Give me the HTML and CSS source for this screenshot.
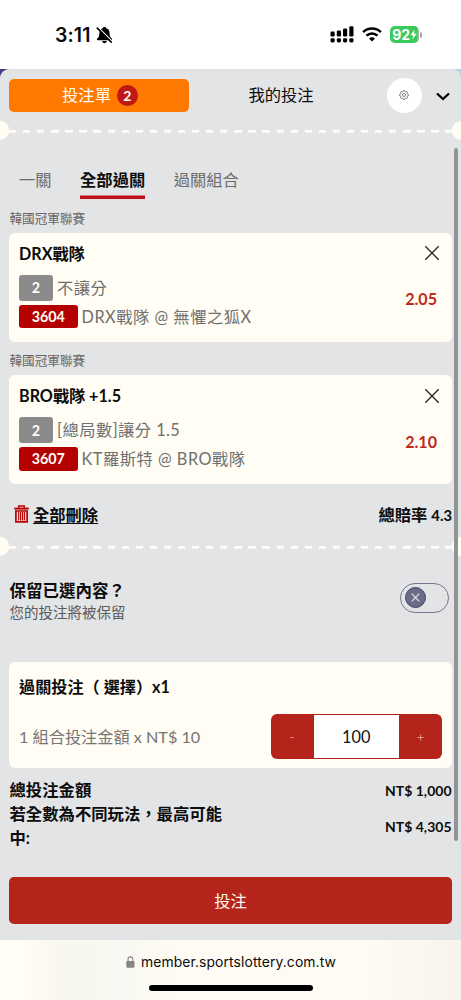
FILE: index.html
```html
<!DOCTYPE html>
<html lang="zh-Hant">
<head>
<meta charset="utf-8">
<meta name="viewport" content="width=device-width, initial-scale=1">
<title>投注單</title>
<link rel="stylesheet" href="styles.css">
</head>
<body>
<div class="phone">
  <header class="status">
    <div class="status-left">
      <span class="clock">3:11</span>
      <svg class="bell" width="17" height="18" viewBox="0 0 17 18"><path d="M8.5 1C7.4 1 6.8 1.6 6.7 2.3C4.4 3 3.5 4.9 3.4 7.2C3.3 10.4 2.6 11.3 1.2 12.6C.5 13.3.8 14.2 1.8 14.2H15.2C16.2 14.2 16.5 13.3 15.8 12.6C14.4 11.3 13.7 10.4 13.6 7.2C13.5 4.9 12.6 3 10.3 2.3C10.2 1.6 9.6 1 8.5 1ZM6.1 15.1C6.5 16.6 7.3 17.2 8.5 17.2S10.5 16.6 10.9 15.1Z"/><path d="M2 1.2L17 16.2" stroke="#fff" stroke-width="1.4"/><path d="M.8 1.6L15.8 16.6" stroke="#000" stroke-width="1.5"/></svg>
    </div>
    <div class="status-right">
      <svg width="24" height="17" viewBox="0 0 24 17"><rect x=".5" y="5.5" width="4.2" height="5" rx="1.3"/><rect x="6.8" y="4.4" width="4.2" height="6.1" rx="1.3"/><rect x="13" y="2.4" width="4.2" height="8.1" rx="1.3"/><rect x="19.3" y=".3" width="4.2" height="10.2" rx="1.3"/><rect x=".5" y="12.2" width="4.2" height="4.2" rx="1.4"/><rect x="6.8" y="12.2" width="4.2" height="4.2" rx="1.4"/><rect x="13" y="12.2" width="4.2" height="4.2" rx="1.4"/><rect x="19.3" y="12.2" width="4.2" height="4.2" rx="1.4"/></svg>
      <svg class="wifi" width="20" height="15" viewBox="0 0 20 15" fill="none" stroke="#000" stroke-width="2.5"><path d="M1.1 5.2C6 .4 14 .4 18.9 5.2"/><path d="M4.5 8.7C7.5 5.8 12.500 5.8 15.500 8.7"/><path d="M10 14.400L7 11.400C8.700 9.900 11.300 9.900 13 11.400Z" fill="#000" stroke="none"/></svg>
      <span class="battery"><span class="level">92</span><svg width="7" height="11" viewBox="0 0 7 11"><path d="M4.600 .5L.4 6.200H3L2.300 10.500L6.700 4.700H4Z" fill="#fff"/></svg></span><i class="nub"></i>
    </div>
  </header>

  <div class="backdrop">
  <main class="sheet">
    <nav class="switcher">
      <button class="slip"><span class="label">投注單</span><span class="count">2</span></button>
      <span class="mine">我的投注</span>
      <span class="gear"><svg width="10" height="10" viewBox="0 0 12 12" fill="none" stroke="#555" stroke-width=".85"><path d="M4.900 1.900L5.200 .7H6.800L7.100 1.900L8.200 2.400L9.300 1.700L10.300 2.700L9.700 3.800L10.100 4.900L11.300 5.200V6.800L10.100 7.100L9.700 8.200L10.300 9.300L9.300 10.300L8.200 9.700L7.100 10.100L6.800 11.300H5.200L4.900 10.100L3.800 9.700L2.700 10.300L1.700 9.300L2.400 8.200L1.900 7.100L.7 6.800V5.200L1.900 4.900L2.400 3.800L1.700 2.700L2.700 1.700L3.800 2.400Z"/><circle cx="6" cy="6" r="1.800"/></svg></span>
      <svg class="chevron" width="14" height="9" viewBox="0 0 14 9"><path d="M1 1.500L7 7L13 1.500" fill="none" stroke="#000" stroke-width="2.300"/></svg>
    </nav>
    <div class="tear"></div>

    <nav class="tabs">
      <span>一關</span><span class="active">全部過關</span><span>過關組合</span>
    </nav>

    <div class="league">韓國冠軍聯賽</div>
    <section class="card bet">
      <div class="bet-info">
        <h3>DRX戰隊</h3>
        <p class="line"><span class="tag gray">2</span><span class="text">不讓分</span></p>
        <p class="line match"><span class="tag red">3604</span><span class="text">DRX戰隊 @ 無懼之狐X</span></p>
      </div>
      <div class="bet-side">
        <svg class="close" width="16" height="16" viewBox="0 0 16 16"><path d="M1.300 1.300L14.700 14.700M14.700 1.300L1.300 14.700" stroke="#222" stroke-width="1.300"/></svg>
        <b class="odds">2.05</b>
      </div>
    </section>

    <div class="league second">韓國冠軍聯賽</div>
    <section class="card bet">
      <div class="bet-info">
        <h3>BRO戰隊 +1.5</h3>
        <p class="line"><span class="tag gray">2</span><span class="text">[總局數]讓分 1.5</span></p>
        <p class="line match"><span class="tag red">3607</span><span class="text">KT羅斯特 @ BRO戰隊</span></p>
      </div>
      <div class="bet-side">
        <svg class="close" width="16" height="16" viewBox="0 0 16 16"><path d="M1.300 1.300L14.700 14.700M14.700 1.300L1.300 14.700" stroke="#222" stroke-width="1.300"/></svg>
        <b class="odds">2.10</b>
      </div>
    </section>

    <div class="summary">
      <div class="clear"><svg width="15" height="18" viewBox="0 0 15 18" fill="none" stroke="#b80000"><path d="M.3 3.600H14.700" stroke-width="2"/><path d="M4.700 3V1H10.300V3" stroke-width="1.300"/><path d="M1.900 6V16.800H13.100V6Z" stroke-width="1.700"/><path d="M4.700 7V15.500M6.600 7V15.500M8.500 7V15.500M10.400 7V15.500" stroke-width="1.100"/></svg><a>全部刪除</a></div>
      <b class="total-odds">總賠率 <span>4.3</span></b>
    </div>
    <div class="tear"></div>

    <section class="keep">
      <div><h4>保留已選內容？</h4><p>您的投注將被保留</p></div>
      <span class="toggle"><span class="knob"><svg width="9" height="9" viewBox="0 0 9 9"><path d="M.7 .7L8.300 8.300M8.300 .7L.7 8.300" stroke="#e4e5e8" stroke-width="1.200"/></svg></span></span>
    </section>

    <section class="card stake">
      <h3>過關投注（ 選擇）x1</h3>
      <div class="stake-row">
        <span>1 組合投注金額 x NT$ 10</span>
        <div class="stepper"><button>-</button><span class="amount">100</span><button>+</button></div>
      </div>
    </section>

    <section class="totals">
      <div class="names"><div>總投注金額</div><div>若全數為不同玩法，最高可能中:</div></div>
      <div class="values"><div>NT$ 1,000</div><div>NT$ 4,305</div></div>
    </section>

    <button class="submit">投注</button>
    <i class="scrollbar"></i>
  </main>
  </div>

  <footer class="browser">
    <div class="address"><svg width="9" height="12" viewBox="0 0 9 12"><rect x=".3" y="5" width="8.200" height="6.700" rx="1.200" fill="#858585"/><path d="M2 5.500V3.200C2 .1 6.800 .1 6.800 3.200V5.500" fill="none" stroke="#858585" stroke-width="1.100"/></svg><span>member.sportslottery.com.tw</span></div>
    <i class="home"></i>
  </footer>
</div>
</body>
</html>
```
FILE: styles.css
```css
* { box-sizing: border-box; margin: 0; padding: 0; }
body {
  width: 461px;
  height: 1000px;
  overflow: hidden;
  font-family: Lato, "Noto Sans CJK TC", sans-serif;
  font-size: 16.3px;
  color: #0c0c0c;
  background: #fff;
  white-space: nowrap;
}
button { border: 0; font: inherit; color: inherit; }
svg { display: block; flex: none; }
.phone { display: flex; flex-direction: column; height: 1000px; }

.status { height: 69px; display: flex; justify-content: space-between; padding: 0 39px 0 55px; flex: none; }
.status-left { display: flex; align-items: center; gap: 5px; }
.clock { font: 600 19.5px/24px Inter, sans-serif; letter-spacing: .1px; }
.bell { margin-top: 1px; }
.status-right { display: flex; align-items: center; }
.wifi { margin-left: 8px; }
.battery {
  display: flex; align-items: center; justify-content: center;
  width: 29px; height: 17px; margin-left: 8px; border-radius: 5px;
  background: linear-gradient(90deg, #39ca5c 92%, #a6aaa6 92%);
  color: #fff;
}
.level { font: 700 14px/17px Inter, sans-serif; letter-spacing: -.2px; }
.nub { width: 2px; height: 6px; margin-left: 1px; border-radius: 0 2px 2px 0; background: #a8a8a8; }

.backdrop { flex: none; height: 871px; background: linear-gradient(90deg, #3e3c88 50%, #b9d4e5 50%); }
.sheet { position: relative; height: 871px; background: #e3e4e6; border-radius: 9px 9px 0 0; overflow: hidden; }

.switcher { display: flex; align-items: center; height: 52px; padding: 0 11px 0 9px; }
.slip {
  display: flex; align-items: center; justify-content: center; gap: 6px;
  width: 180px; height: 33px; padding-left: 2px; border-radius: 5px; background: #ff7900; color: #fffdf5;
}
.slip .label, .mine { padding-bottom: 2px; }
.count { width: 21px; height: 21px; border-radius: 50%; background: #c01816; font-weight: 700; font-size: 14px; line-height: 21px; text-align: center; }
.mine { margin-left: 59.500px; }
.gear { display: grid; place-items: center; width: 35px; height: 35px; margin-left: 73px; border-radius: 50%; background: #fff; }
.chevron { margin: 2px 0 0 14px; }

.tear {
  height: 19px;
  background:
    radial-gradient(circle at 0 50%, #fffdf4 9px, transparent 9.500px),
    radial-gradient(circle at 100% 50%, #fffdf4 9px, transparent 9.500px),
    repeating-linear-gradient(90deg, #fffdf4 0 7.300px, transparent 7.300px 14.080px) 8.700px 9px / 443px 2.700px no-repeat;
}

.tabs { display: flex; gap: 28.500px; height: 59px; padding: 26px 19px 0; color: #6d6d6d; line-height: 28px; }
.tabs span { height: 33px; }
.tabs .active { color: #0c0c0c; font-weight: 700; box-shadow: inset 0 -3.500px #c01116; }

.league { height: 33.700px; padding: 10px 9.500px 0; font-size: 12.600px; line-height: 20px; color: #666; }
.league.second { height: 33.200px; padding-top: 9px; }
.card { margin: 0 9px; border-radius: 6px; background: #fffdf4; }
.bet { height: 109.200px; display: flex; justify-content: space-between; padding: 9px 12px 0 10px; }
h3 { font-size: 16.150px; line-height: 24px; font-weight: 700; }
.line { display: flex; align-items: center; height: 26px; margin-top: 9px; color: #707070; letter-spacing: .45px; gap: 4px; }
.line.match { height: 23.500px; margin-top: 4px; letter-spacing: .52px; }
.line .text { margin-top: -1.500px; }
.tag { height: 100%; display: flex; align-items: center; justify-content: center; border-radius: 3px; color: #fffdf5; font-weight: 700; font-size: 14.300px; letter-spacing: 0; }
.gray { width: 34px; background: #8a8a8a; }
.red { width: 58.500px; background: #b40000; }
.bet-side { display: flex; flex-direction: column; align-items: flex-end; padding-top: 3.500px; }
.odds { margin: 28px 3px 0 0; color: #bd2b20; line-height: 20px; font-size: 16.100px; }

.summary { display: flex; justify-content: space-between; align-items: center; height: 52.600px; padding: 7px 9px 0 14px; }
.clear { display: flex; align-items: center; gap: 4px; font-weight: 700; }
.clear a { text-decoration: underline; text-decoration-thickness: 1px; text-underline-offset: 2px; }
.total-odds span { font-size: 14.800px; }

.keep { display: flex; justify-content: space-between; align-items: flex-start; height: 105.700px; padding: 24.500px 12px 0 9.500px; }
h4 { font-size: 16.500px; line-height: 22px; }
.keep p { font-size: 14.500px; line-height: 22px; color: #5b5b5b; }
.toggle { display: flex; align-items: center; width: 49px; height: 30px; margin-top: 2.500px; padding-left: 4px; border: 1px solid #77758f; border-radius: 15px; }
.knob { display: grid; place-items: center; width: 21px; height: 21px; border: 1px solid #44416a; border-radius: 50%; background: #6b6b87; }

.stake { height: 106.700px; padding: 13px 10px 0 10px; }
.stake-row { display: flex; justify-content: space-between; align-items: center; margin-top: 15px; color: #757575; font-size: 16.200px; }
.stepper { display: flex; width: 171.500px; height: 45px; padding: 1px 0; border-radius: 6px; overflow: hidden; background: #b5241a; }
.stepper button { width: 43px; background: none; color: #f7d3cb; font-size: 14px; font-weight: 300; }
.amount { flex: 1; background: #fff; color: #111; font-size: 16.300px; line-height: 44px; text-align: center; }

.totals { display: flex; justify-content: space-between; height: 109px; padding: 10px 9.500px 0; font-weight: 700; }
.names { width: 220px; white-space: normal; line-height: 23.700px; font-size: 16.350px; }
.values { text-align: right; font-size: 14px; line-height: 36px; margin-top: -5px; }
.submit { display: block; width: 443px; height: 47px; margin: 0 9px; padding-bottom: 2px; border-radius: 5px; background: #b5241a; color: #fffaf0; }
.scrollbar { position: absolute; top: 79px; right: 3px; width: 4px; height: 693px; border-radius: 2px; background: #939395; }

.browser {
  flex: none; height: 60px; padding-top: 12px;
  display: flex; flex-direction: column; align-items: center;
  background: linear-gradient(90deg, #fffdf4 0, #fffdf4 5%, #f7f6ef 15%, #f9f8f2 26%, #fdfbf4 38%, #fdfbf4 80%, #f6f4ed 100%);
}
.address { display: flex; align-items: center; gap: 6px; height: 20px; margin-left: 1px; font: 13.900px/20px Inter, sans-serif; letter-spacing: .1px; }
.home { width: 164px; height: 6px; margin-top: 13px; margin-left: 1px; border-radius: 3px; background: #000; }
```
